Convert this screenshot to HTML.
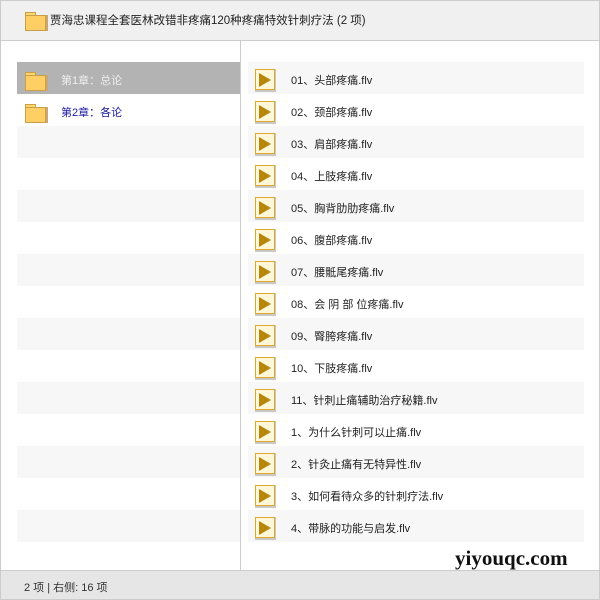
<!DOCTYPE html>
<html><head><meta charset="utf-8"><style>
*{margin:0;padding:0;box-sizing:border-box}
body{width:600px;height:600px;overflow:hidden;background:#fff;font-family:"Liberation Sans","Noto Sans CJK SC",sans-serif;font-size:11px;color:#222;position:relative}
.frame{position:absolute;left:0;top:0;width:600px;height:600px;border:1px solid #ccc;pointer-events:none}
.top{position:absolute;left:0;top:0;width:600px;height:41px;background:#f0f0f0;border-bottom:1px solid #ccc}
.top span{position:absolute;left:50px;top:12px;font-size:11.5px;color:#222}
.fold{position:absolute;width:20px;height:17px}
.fold:before{content:"";position:absolute;left:0;top:0;width:9px;height:4px;background:#ffd46b;border:1px solid #c9a04a;border-bottom:none}
.fold:after{content:"";position:absolute;left:0;top:3px;width:19px;height:14px;background:#ffcf66;border:1px solid #c9a04a;box-shadow:2px 0 0 #c9a875}
.row{position:absolute;height:32px}
.l{left:17px;width:223px}
.r{left:248px;width:336px}
.g{background:#f7f7f7}
.sel{background:#b3b3b3}
.l span{position:absolute;left:44px;top:10px;color:#1a1aa0}
.sel span{color:#eee}
.vid{position:absolute;left:7px;top:7px;width:21px;height:23px;background:#c8c8c8}
.vid i{position:absolute;left:0;top:0;width:20px;height:21px;background:#fff7da;border:1px solid #e0a82a}
.vid i:after{content:"";position:absolute;left:3px;top:3px;border-left:12px solid #b8860b;border-top:7px solid transparent;border-bottom:7px solid transparent}
.r span{position:absolute;left:43px;top:10px}
.div{position:absolute;left:240px;top:41px;width:1px;height:529px;background:#ccc}
.bot{position:absolute;left:0;top:570px;width:600px;height:30px;background:#e6e6e6;border-top:1px solid #ccc}
.bot span{position:absolute;left:24px;top:8px;color:#333}
.wm{position:absolute;left:455px;top:546px;font-family:"Liberation Serif",serif;font-weight:bold;font-size:21px;color:#111}
</style></head><body>
<div class="top"><div class="fold" style="left:25px;top:12px"></div><span>贾海忠课程全套医林改错非疼痛120种疼痛特效针刺疗法 (2 项)</span></div>
<div class="row l sel" style="top:62px"><div class="fold" style="left:8px;top:10px"></div><span>第1章：总论</span></div>
<div class="row l" style="top:94px"><div class="fold" style="left:8px;top:10px"></div><span>第2章：各论</span></div>
<div class="row l g" style="top:126px"></div>
<div class="row l g" style="top:190px"></div>
<div class="row l g" style="top:254px"></div>
<div class="row l g" style="top:318px"></div>
<div class="row l g" style="top:382px"></div>
<div class="row l g" style="top:446px"></div>
<div class="row l g" style="top:510px"></div>
<div class="div"></div>
<div class="row r g" style="top:62px"><div class="vid"><i></i></div><span>01、头部疼痛.flv</span></div>
<div class="row r" style="top:94px"><div class="vid"><i></i></div><span>02、颈部疼痛.flv</span></div>
<div class="row r g" style="top:126px"><div class="vid"><i></i></div><span>03、肩部疼痛.flv</span></div>
<div class="row r" style="top:158px"><div class="vid"><i></i></div><span>04、上肢疼痛.flv</span></div>
<div class="row r g" style="top:190px"><div class="vid"><i></i></div><span>05、胸背肋肋疼痛.flv</span></div>
<div class="row r" style="top:222px"><div class="vid"><i></i></div><span>06、腹部疼痛.flv</span></div>
<div class="row r g" style="top:254px"><div class="vid"><i></i></div><span>07、腰骶尾疼痛.flv</span></div>
<div class="row r" style="top:286px"><div class="vid"><i></i></div><span>08、会 阴 部 位疼痛.flv</span></div>
<div class="row r g" style="top:318px"><div class="vid"><i></i></div><span>09、臀胯疼痛.flv</span></div>
<div class="row r" style="top:350px"><div class="vid"><i></i></div><span>10、下肢疼痛.flv</span></div>
<div class="row r g" style="top:382px"><div class="vid"><i></i></div><span>11、针刺止痛辅助治疗秘籍.flv</span></div>
<div class="row r" style="top:414px"><div class="vid"><i></i></div><span>1、为什么针刺可以止痛.flv</span></div>
<div class="row r g" style="top:446px"><div class="vid"><i></i></div><span>2、针灸止痛有无特异性.flv</span></div>
<div class="row r" style="top:478px"><div class="vid"><i></i></div><span>3、如何看待众多的针刺疗法.flv</span></div>
<div class="row r g" style="top:510px"><div class="vid"><i></i></div><span>4、带脉的功能与启发.flv</span></div>
<div class="wm">yiyouqc.com</div>
<div class="bot"><span>2 项 | 右侧: 16 项</span></div>
<div class="frame"></div>
</body></html>
